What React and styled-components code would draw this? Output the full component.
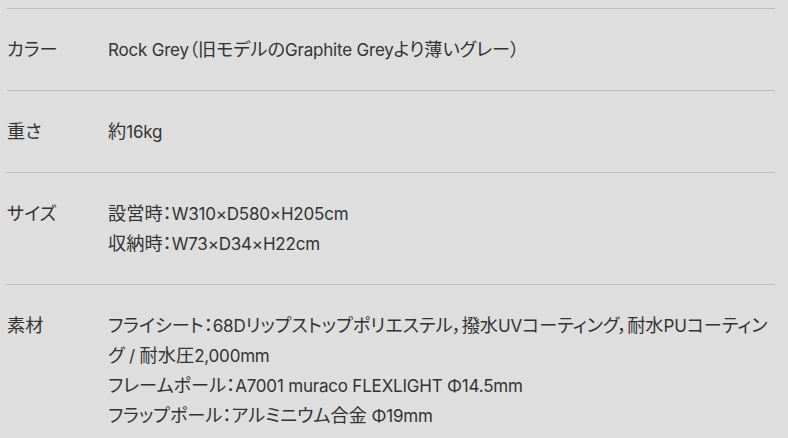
import styled, { createGlobalStyle } from "styled-components";

const GlobalStyle = createGlobalStyle`
  html, body {
    margin: 0;
    background: #dedede;
  }
  body {
    font-family: Inter, "Noto Sans CJK JP", sans-serif;
    color: #333;
  }
`;

const specs = [
  {
    label: "カラー",
    lines: ["Rock Grey（旧モデルのGraphite Greyより薄いグレー）"],
  },
  { label: "重さ", lines: ["約16kg"] },
  {
    label: "サイズ",
    lines: ["設営時：W310×D580×H205cm", "収納時：W73×D34×H22cm"],
  },
  {
    label: "素材",
    lines: [
      "フライシート：68Dリップストップポリエステル，撥水UVコーティング，耐水PUコーティング / 耐水圧2,000mm",
      "フレームポール：A7001 muraco FLEXLIGHT Φ14.5mm",
      "フラップポール：アルミニウム合金 Φ19mm",
    ],
  },
];

// japanese runs are set a little larger than the latin text
const JP_RUN = /([\u3000-\u30ff\u4e00-\u9fff\uff00-\uffef]+)/;

const Mixed = ({ text }) =>
  text
    .split(JP_RUN)
    .map((part, i) =>
      i % 2 ? <Jp key={i}>{part}</Jp> : part
    );

const App = () => {
  return (
    <>
      <GlobalStyle />
      <StyledSpecs>
        {specs.map((spec) => (
          <Row key={spec.label}>
            <Label>
              <Mixed text={spec.label} />
            </Label>
            <Value>
              {spec.lines.map((line) => (
                <p key={line}>
                  <Mixed text={line} />
                </p>
              ))}
            </Value>
          </Row>
        ))}
      </StyledSpecs>
    </>
  );
};

const StyledSpecs = styled.dl`
  margin: 8px 13px 0 7px;
  padding: 0;
  border-top: 1px solid #bdbdbd;
`;

const Row = styled.div`
  display: grid;
  grid-template-columns: 101px 1fr;
  padding: 26px 0 25px;
  border-bottom: 1px solid #bdbdbd;
  font-size: 17px;
  line-height: 30px;
  letter-spacing: -0.2px;
  font-feature-settings: "palt";
`;

const Jp = styled.span`
  font-size: 18.2px;
  line-height: 1;
  letter-spacing: 0;
`;

const Label = styled.dt`
  margin: 0;
`;

const Value = styled.dd`
  margin: 0;

  p {
    margin: 0;
  }
`;

export default App;
